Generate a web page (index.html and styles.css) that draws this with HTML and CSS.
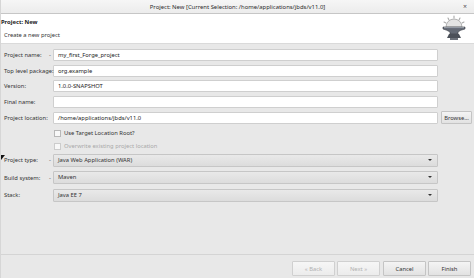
FILE: index.html
```html
<!DOCTYPE html>
<html lang="en">
<head>
  <meta charset="UTF-8" />
  <title>Project: New</title>
  <link rel="stylesheet" href="styles.css">
</head>
<body>
  <div class="dialog">
    <div class="titlebar">
      <span class="title">Project: New [Current Selection: /home/applications/jbds/v11.0]</span>
      <span class="close">×</span>
    </div>

    <div class="banner">
      <div class="banner-text">
        <div class="banner-title">Project: New</div>
        <div class="banner-sub">Create a new project</div>
      </div>
      <!-- forge anvil icon -->
      <svg class="banner-icon" width="28" height="26" viewBox="0 0 28 26">
        <path d="M6 12 A8 8 0 0 1 22 12 Z" fill="#e4e4e4" stroke="#9a9a9a" stroke-width="0.7" />
        <g stroke="#a8a8a8" stroke-width="1.1" stroke-linecap="round">
          <line x1="14" y1="1" x2="14" y2="3" />
          <line x1="8" y1="3" x2="9" y2="5" />
          <line x1="20" y1="3" x2="19" y2="5" />
          <line x1="4" y1="7" x2="6" y2="8" />
          <line x1="24" y1="7" x2="22" y2="8" />
        </g>
        <path d="M3 12 H25 V14 Q20 15 18 17 V19 H10 V17 Q7 15 3 14 Z" fill="#646a75" stroke="#3c4048" stroke-width="0.6" />
        <path d="M4 12.6 H24" stroke="#b8bec8" stroke-width="0.7" />
        <path d="M9 19 H19 L21 23 H7 Z" fill="#4b5059" />
        <rect x="10" y="23" width="8" height="2" fill="#6d727b" />
      </svg>
    </div>

    <div class="body">
      <div class="form">
        <label class="lbl">Project name:</label>
        <span class="req">-</span>
        <div class="field">my_first_Forge_project</div>
        <span></span>

        <label class="lbl">Top level package:</label>
        <span class="req"></span>
        <div class="field">org.example</div>
        <span></span>

        <label class="lbl">Version:</label>
        <span class="req"></span>
        <div class="field">1.0.0-SNAPSHOT</div>
        <span></span>

        <label class="lbl">Final name:</label>
        <span class="req"></span>
        <div class="field"></div>
        <span></span>

        <label class="lbl">Project location:</label>
        <span class="req"></span>
        <div class="field">/home/applications/jbds/v11.0</div>
        <button class="btn browse">Browse...</button>
      </div>

      <div class="checks">
        <div class="check"><span class="box"></span>Use Target Location Root?</div>
        <div class="check disabled"><span class="box"></span>Overwrite existing project location</div>
      </div>

      <div class="form combos">
        <label class="lbl"><span class="cursor"></span>Project type:</label>
        <span class="req">-</span>
        <div class="combo">Java Web Application (WAR)<span class="arrow"></span></div>
        <span></span>

        <label class="lbl">Build system:</label>
        <span class="req">-</span>
        <div class="combo">Maven<span class="arrow"></span></div>
        <span></span>

        <label class="lbl">Stack:</label>
        <span class="req"></span>
        <div class="combo">Java EE 7<span class="arrow"></span></div>
        <span></span>
      </div>
    </div>

    <div class="footer">
      <button class="btn wide" disabled>« Back</button>
      <button class="btn wide" disabled>Next »</button>
      <button class="btn wide gap">Cancel</button>
      <button class="btn wide">Finish</button>
    </div>
  </div>
</body>
</html>
```

FILE: styles.css
```css
body {
  margin: 0;
  padding: 0;
  font-family: 'Noto Sans', 'Open Sans', sans-serif;
  font-size: 5.8px;
  color: #2e3436;
  background: #e8e8e8;
}
.dialog {
  width: 474px;
  height: 278px;
  display: flex;
  flex-direction: column;
  background: #e8e8e8;
  border-left: 1px solid #d6d6d6;
  box-sizing: border-box;
}
.titlebar {
  height: 14px;
  flex: none;
  display: flex;
  align-items: center;
  justify-content: center;
  position: relative;
  background: linear-gradient(#f6f6f6, #ececec);
  border-bottom: 1px solid #c6c6c6;
  box-sizing: border-box;
}
.title {
  font-size: 5.9px;
  color: #2a2a2a;
}
.close {
  position: absolute;
  right: 7px;
  top: 2px;
  font-size: 7px;
  color: #555;
}
.banner {
  height: 30px;
  flex: none;
  background: #fff;
  display: flex;
  justify-content: space-between;
  border-bottom: 1px solid #dadada;
  box-sizing: border-box;
}
.banner-text {
  padding-top: 4px;
}
.banner-title {
  font-weight: bold;
  color: #222;
}
.banner-sub {
  margin-top: 5px;
  margin-left: 3px;
  color: #333;
}
.banner-icon {
  margin: 1px 6px 0 0;
}
.body {
  flex: 1;
  padding-top: 5px;
}
.form {
  display: grid;
  grid-template-columns: 43px 6px 385px 34px;
  grid-auto-rows: 12px;
  row-gap: 3.7px;
  align-items: center;
  padding-left: 3px;
}
.lbl {
  color: #333;
  white-space: nowrap;
  position: relative;
}
.req {
  color: #555;
  font-size: 6px;
  text-align: center;
}
.field {
  height: 12px;
  box-sizing: border-box;
  background: #fff;
  border: 1px solid #cfcfcf;
  border-radius: 1px;
  padding-left: 4px;
  line-height: 10px;
  color: #222;
}
.btn {
  font-family: 'Noto Sans', 'Open Sans', sans-serif;
  font-size: 5.8px;
  color: #333;
  background: linear-gradient(#f4f4f4, #e2e2e2);
  border: 1px solid #c4c4c4;
  border-radius: 1px;
  padding: 0;
}
.browse {
  height: 13px;
  width: 31px;
  margin-left: 3px;
}
.checks {
  padding: 3px 0 0 53px;
}
.check {
  display: flex;
  align-items: center;
  height: 13px;
  color: #333;
}
.check.disabled {
  color: #a8a8a8;
}
.box {
  width: 5px;
  height: 5px;
  border: 1px solid #b8b8b8;
  background: #f8f8f8;
  margin-right: 3px;
}
.check.disabled .box {
  border-color: #cccccc;
}
.combos {
  grid-auto-rows: 13px;
  row-gap: 4.5px;
  margin-top: 1px;
}
.combo {
  height: 13px;
  box-sizing: border-box;
  background: linear-gradient(#e9e9e9, #dcdcdc);
  border: 1px solid #c6c6c6;
  border-radius: 1px;
  padding-left: 4px;
  line-height: 11px;
  color: #333;
  position: relative;
}
.arrow {
  position: absolute;
  right: 5px;
  top: 4px;
  border-left: 2px solid transparent;
  border-right: 2px solid transparent;
  border-top: 2px solid #333;
}
.cursor {
  position: absolute;
  left: -3px;
  top: -1px;
  width: 0;
  height: 0;
  border-left: 4px solid #111;
  border-bottom: 5px solid transparent;
}
.footer {
  height: 24px;
  flex: none;
  border-top: 1px solid #d4d4d4;
  display: flex;
  justify-content: flex-end;
  align-items: flex-start;
  gap: 2px;
  padding: 6px 3px 0 0;
  box-sizing: border-box;
}
.wide {
  width: 43px;
  height: 15px;
}
.wide:disabled {
  color: #b0b0b0;
  background: linear-gradient(#f6f6f6, #ececec);
  border-color: #d0d0d0;
}
.gap {
  margin-left: 1px;
}
```
